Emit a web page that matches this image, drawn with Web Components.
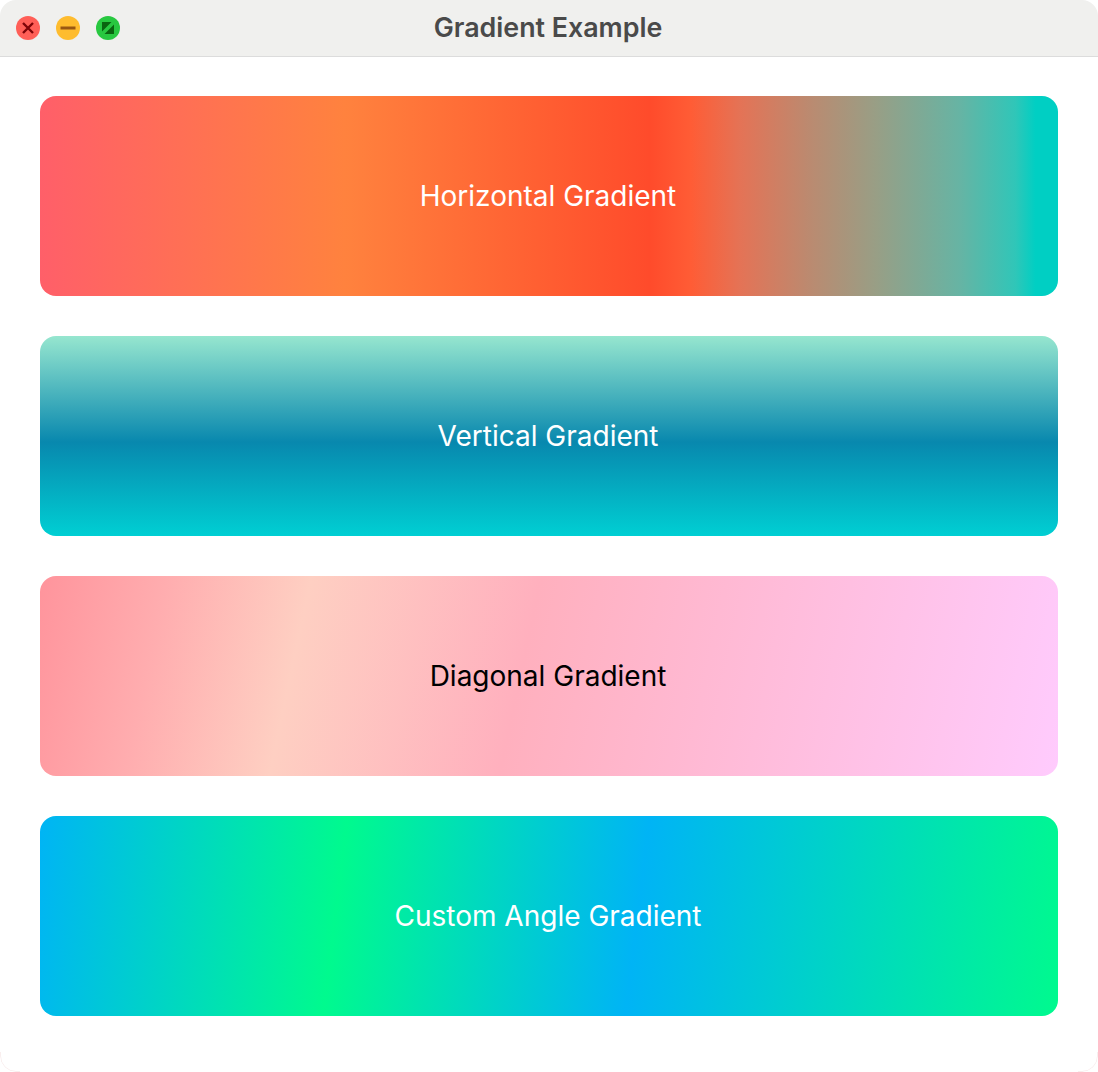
<!DOCTYPE html>
<html lang="en">
	<head>
		<meta charset="UTF-8" />
		<title>Gradient Example</title>
		<style>
			html,
			body {
				margin: 0;
				background: #fff;
			}
		</style>
	</head>
	<body>
		<template id="window-tmpl">
			<style>
				:host {
					display: block;
					position: relative;
					box-sizing: border-box;
					height: 1072px;
					border-radius: 16px;
					overflow: hidden;
					background: #fff;
					font-family: Inter, 'Liberation Sans', sans-serif;
				}
				/* hairline only shows at the two bottom corners */
				:host::after {
					content: '';
					position: absolute;
					inset: 0;
					border: 1px solid #f9eeee;
					border-radius: 16px;
					pointer-events: none;
					-webkit-mask:
						linear-gradient(#000 0 0) left bottom / 20px 20px no-repeat,
						linear-gradient(#000 0 0) right bottom / 20px 20px no-repeat;
					mask:
						linear-gradient(#000 0 0) left bottom / 20px 20px no-repeat,
						linear-gradient(#000 0 0) right bottom / 20px 20px no-repeat;
				}
				main {
					display: flex;
					flex-direction: column;
					gap: 40px;
					padding: 39px 40px 0;
				}
			</style>
			<slot name="bar"></slot>
			<main><slot></slot></main>
		</template>

		<template id="bar-tmpl">
			<style>
				:host {
					display: grid;
					grid-template-columns: 1fr auto 1fr;
					align-items: center;
					box-sizing: border-box;
					height: 57px;
					padding: 0 16px;
					background: #f0f0ee;
					border-bottom: 1px solid #dcdcdc;
				}
				.lights {
					display: flex;
					gap: 16px;
				}
				.title {
					font-size: 26.8px;
					font-weight: 600;
					line-height: 32px;
					margin: -3px 0 0 -2px;
					color: #4a4a4a;
				}
			</style>
			<div class="lights"><slot name="lights"></slot></div>
			<div class="title"><slot></slot></div>
		</template>

		<template id="card-tmpl">
			<style>
				:host {
					display: flex;
					align-items: center;
					justify-content: center;
					height: 200px;
					border-radius: 16px;
					background: var(--fill);
					color: var(--ink, #fff);
					font-size: 28px;
					font-weight: 400;
				}
				span {
					margin: -1px 2px 0 0;
				}
			</style>
			<span><slot></slot></span>
		</template>

		<script>
			// all three share the same clone-template boilerplate
			const fromTemplate = (name, tmpl) =>
				customElements.define(
					name,
					class extends HTMLElement {
						connectedCallback() {
							if (this.shadowRoot) return;
							this.attachShadow({ mode: 'open' }).append(
								document.getElementById(tmpl).content.cloneNode(true),
							);
						}
					},
				);

			fromTemplate('app-window', 'window-tmpl');
			fromTemplate('title-bar', 'bar-tmpl');
			fromTemplate('gradient-card', 'card-tmpl');

			const glyphs = {
				close: '<path d="M7 7l10 10M17 7L7 17" stroke="#7e0508" stroke-width="2.4" />',
				minimize: '<path d="M4.5 12h15" stroke="#985712" stroke-width="3" />',
				zoom: '<path d="M6 6h9.5L6 15.5zM18 18H8.5L18 8.5z" fill="#0a6410" />',
			};
			const fills = { close: '#ff5f57', minimize: '#febc2e', zoom: '#28c840' };

			customElements.define(
				'traffic-light',
				class extends HTMLElement {
					connectedCallback() {
						const kind = this.getAttribute('kind');
						this.attachShadow({ mode: 'open' }).innerHTML = `
							<style>
								:host { display: block; width: 24px; height: 24px; }
								svg { display: block; }
							</style>
							<svg width="24" height="24" viewBox="0 0 24 24" fill="none">
								<circle cx="12" cy="12" r="12" fill="${fills[kind]}" />
								${glyphs[kind]}
							</svg>`;
					}
				},
			);
		</script>

		<app-window>
			<title-bar slot="bar">
				<traffic-light slot="lights" kind="close"></traffic-light>
				<traffic-light slot="lights" kind="minimize"></traffic-light>
				<traffic-light slot="lights" kind="zoom"></traffic-light>
				Gradient Example
			</title-bar>
			<gradient-card style="--fill: linear-gradient(90deg, #ff5f69 0%, #ff823e 30%, #ff4b2b 59.9%, #ff5c35 63.9%, #e47356 68.8%, #bb8a70 75.6%, #999e85 82%, #66b4a4 90.4%, #30c6b8 95.8%, #00cfc3 97.8%, #00cfc3 100%)">Horizontal Gradient</gradient-card>
			<gradient-card style="--fill: linear-gradient(180deg, #96e6cf 0%, #0888ae 53%, #00cfd3 100%)">Vertical Gradient</gradient-card>
			<gradient-card style="--fill: linear-gradient(102deg, #ff949c 0%, #ffadaf 12%, #fecfc2 25.6%, #ffb0be 47.3%, #ffcbfd 100%); --ink: #000">Diagonal Gradient</gradient-card>
			<gradient-card style="--fill: linear-gradient(97deg, #00b4f5 0%, #00fa8e 29.5%, #00b4f5 58.5%, #00fa8e 100%)">Custom Angle Gradient</gradient-card>
		</app-window>
	</body>
</html>
